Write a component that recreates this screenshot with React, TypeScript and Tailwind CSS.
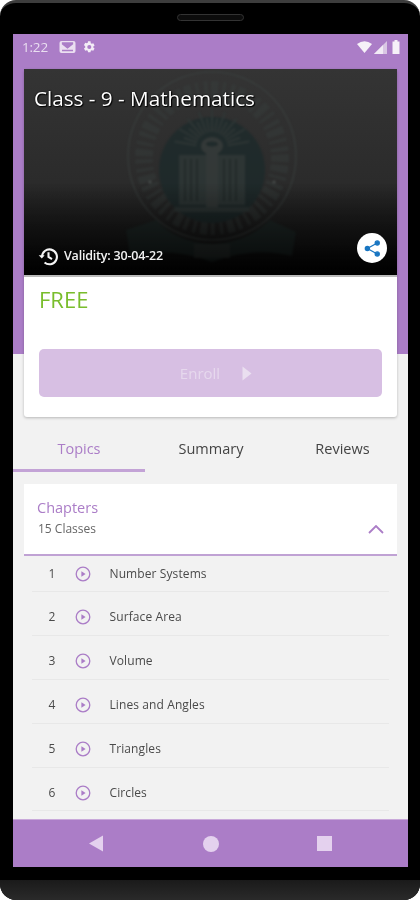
import React from "react";

const chapters = ["Number Systems", "Surface Area", "Volume", "Lines and Angles", "Triangles", "Circles"];

function PlayRing() {
  return (
    <svg width="16" height="16" viewBox="0 0 16 16" className="shrink-0">
      <circle cx="8" cy="8" r="6.8" fill="none" stroke="#ab7dc7" strokeWidth="1.3" />
      <path d="M6.4 5.2 L10.6 8 L6.4 10.8 Z" fill="#ab7dc7" />
    </svg>
  );
}

function Emblem() {
  const rays = Array.from({ length: 17 }, (_, i) => -80 + i * 10);
  return (
    <svg width="176" height="206" viewBox="0 0 176 206" className="shrink-0">
      <circle cx="88" cy="90" r="84" fill="none" stroke="#3e4644" strokeWidth="1.2" />
      <circle cx="88" cy="92" r="68" fill="none" stroke="#3a4341" strokeWidth="18" strokeDasharray="4 3 7 4 3 5" opacity="0.5" />
      <circle cx="88" cy="104" r="53" fill="#19292a" />
      <g stroke="#2e3a39" strokeWidth="2">
        {rays.map((a) => (
          <line
            key={a}
            x1={88 + 16 * Math.sin((a * Math.PI) / 180)}
            y1={82 - 16 * Math.cos((a * Math.PI) / 180)}
            x2={88 + (a % 20 === 0 ? 38 : 30) * Math.sin((a * Math.PI) / 180)}
            y2={82 - (a % 20 === 0 ? 38 : 30) * Math.cos((a * Math.PI) / 180)}
          />
        ))}
      </g>
      <path d="M55 89 H82 V139 H55 Z M94 89 H121 V139 H94 Z" fill="#2e3a39" />
      <path d="M61 93 V135 M67 93 V135 M73 93 V135 M100 93 V135 M106 93 V135 M112 93 V135" stroke="#1f2b2a" strokeWidth="2" />
      <path d="M82 86 H94 V143 H82 Z" fill="#373f3e" />
      <ellipse cx="88" cy="80" rx="11" ry="9" fill="#373f3e" />
      <ellipse cx="88" cy="78" rx="6" ry="2.5" fill="#19292a" />
      <path d="M51 141 H125 V146 H51 Z" fill="#2e3a39" />
      <path d="M2 164 L32 154 Q52 176 88 178 Q124 176 146 154 L172 166 L168 190 Q130 180 88 196 Q46 180 6 190 Z" fill="#1d2a28" />
      <path d="M70 178 H106 V192 H70 Z" fill="#2d3533" />
      <circle cx="26" cy="116" r="1.5" fill="#59615f" />
      <circle cx="150" cy="116" r="1.5" fill="#59615f" />
    </svg>
  );
}

export default function App() {
  return (
    <div className="relative flex h-[900px] w-[420px] flex-col overflow-hidden bg-white font-['Open_Sans',sans-serif] blur-[0.35px]">
      <div className="flex h-full flex-col rounded-[16px] border-t-[3px] border-[#3d3d3d] bg-black">
        <div className="flex h-[31px] shrink-0 justify-center pt-[11px]">
          <div className="h-[7px] w-[67px] rounded-full border border-[#333] bg-[#0c0c0c]" />
        </div>

        <div className="ml-[13px] flex h-[833px] w-[395px] shrink-0 flex-col overflow-hidden bg-[linear-gradient(#ab7dc7_320px,#f2f2f2_320px)]">
          {/* status bar */}
          <div className="flex h-[35px] shrink-0 items-center pb-[9px] pl-[9px] pr-[8px] text-[13.5px] text-[#e9def0]">
            <span className="w-[30px] tracking-[-0.2px]">1:22</span>
            <svg width="17" height="14" viewBox="0 0 17 14" className="ml-[7px]">
              <rect x="0.5" y="1" width="16" height="12" rx="2" fill="#ebdff1" />
              <path d="M3.5 4 L8.5 8 L13.5 4 V3 H3.5 Z M3 10.5 H14" stroke="#ab7dc7" strokeWidth="1.3" fill="#ab7dc7" />
            </svg>
            <svg width="14" height="14" viewBox="0 0 24 24" className="ml-[6px]" fill="#f3edf6">
              <path fillRule="evenodd" d="M19.4 13a7.5 7.5 0 0 0 0-2l2.2-1.7-2.2-3.7-2.6 1a7.6 7.6 0 0 0-1.7-1L14.6 2h-4.3l-.4 2.7a7.6 7.6 0 0 0-1.7 1l-2.6-1-2.2 3.7L5.6 11a7.5 7.5 0 0 0 0 2l-2.2 1.7 2.2 3.7 2.6-1a7.6 7.6 0 0 0 1.7 1l.4 2.6h4.3l.4-2.6a7.6 7.6 0 0 0 1.7-1l2.6 1 2.2-3.7zM12.5 15.5a3.5 3.5 0 1 1 0-7 3.5 3.5 0 0 1 0 7z" />
            </svg>
            <div className="ml-auto flex items-center">
              <svg width="15" height="12" viewBox="0 0 15 12"><path d="M0 3 Q7.5 -2.5 15 3 L7.5 12 Z" fill="#f6f1f8" /></svg>
              <svg width="13" height="13" viewBox="0 0 13 13" className="ml-[2px]">
                <path d="M0 13 L13 0 V13 Z" fill="#d9c6e4" />
                <path d="M0 13 L9 4 V13 Z" fill="#f1eaf5" />
              </svg>
              <svg width="8" height="14" viewBox="0 0 8 14" className="ml-[5px]">
                <path d="M2.5 0 H5.5 V1.5 H7.5 V14 H0.5 V1.5 H2.5 Z" fill="#f6f1f8" />
              </svg>
            </div>
          </div>

          {/* course card */}
          <div className="mx-[11px] shrink-0 rounded-[3px] bg-white shadow-[0_1px_3px_rgba(0,0,0,0.25)]">
            <div className="relative flex h-[206px] flex-col justify-between overflow-hidden bg-[linear-gradient(#343434_0%,#2b2b2b_55%,#141414_85%,#000000_100%)] pb-[12px]">
              <div className="absolute left-[100px] top-[-3px] opacity-65 blur-[0.8px]">
                <Emblem />
              </div>
              <div className="absolute inset-0 bg-[linear-gradient(transparent_55%,rgba(0,0,0,0.7)_100%)]" />
              <h1 className="relative ml-[10px] mt-[15px] text-[20.7px] font-medium leading-[28px] text-white [text-shadow:0_0_2px_#000,1px_1px_1px_#000]">
                Class - 9 - Mathematics
              </h1>
              <div className="relative flex items-end justify-between pl-[14px] pr-[10px]">
                <div className="mb-[-4px] flex items-center text-[12.5px] font-semibold text-[#f2f2f2]">
                  <svg width="21" height="21" viewBox="0 0 24 24" fill="none" stroke="#f5f5f5" strokeWidth="2.4">
                    <path d="M4.6 12.5 A8.5 8.5 0 1 1 7.5 18.8" />
                    <path d="M0.8 10.5 H7.6 L4.4 14.4 Z" fill="#f5f5f5" stroke="none" />
                    <path d="M12 7 V12.6 L16 15" />
                  </svg>
                  <span className="ml-[5px] tracking-[-0.2px]">Validity: 30-04-22</span>
                </div>
                <div className="flex h-[30px] w-[30px] items-center justify-center rounded-full bg-white">
                  <svg width="19" height="19" viewBox="0 0 24 24" fill="#1976c2" stroke="#1976c2" strokeWidth="1.6">
                    <circle cx="18" cy="5" r="2.6" />
                    <circle cx="5.5" cy="12" r="2.6" />
                    <circle cx="18" cy="19" r="2.6" />
                    <path d="M18 5 L5.5 12 L18 19" fill="none" />
                  </svg>
                </div>
              </div>
            </div>
            <div className="border-t-2 border-[#8c8c8c]/60 px-[15px] pb-[20px] pt-[7px]">
              <div className="text-[22px] leading-[30px] text-[#79bd2c]">FREE</div>
              <div className="mt-[35px] flex h-[48px] items-center justify-center rounded-[5px] bg-[#d7bfe3] pl-[11px]">
                <span className="text-[15px] text-[#e6d8ed]">Enroll</span>
                <svg width="10" height="15" viewBox="0 0 10 15" className="ml-[22px]">
                  <path d="M0.5 0.5 L9.5 7.5 L0.5 14.5 Z" fill="#eadff0" />
                </svg>
              </div>
            </div>
          </div>

          {/* tabs */}
          <div className="flex h-[55px] shrink-0 text-[14.5px] font-medium">
            <div className="flex w-[132px] items-center justify-center border-b-[3px] border-[#c3a3d6] pt-[11px] text-[#ab7dc7]">Topics</div>
            <div className="flex w-[132px] items-center justify-center pt-[9px] text-[#444]">Summary</div>
            <div className="flex flex-1 items-center justify-center pt-[9px] text-[#444]">Reviews</div>
          </div>

          {/* chapters */}
          <div className="mx-[11px] mt-[12px] flex h-[72px] shrink-0 items-end justify-between border-b-2 border-[#c0a2d4] bg-white pb-[16px] pl-[13px] pr-[13px]">
            <div className="flex flex-col">
              <span className="text-[14.5px] font-medium leading-[20px] text-[#ab7dc7]">Chapters</span>
              <span className="mt-[2px] pl-[1px] text-[12px] font-medium leading-[18px] text-[#666]">15 Classes</span>
            </div>
            <svg width="16" height="9" viewBox="0 0 16 9" className="mb-[4px]" fill="none" stroke="#ab7dc7" strokeWidth="1.8">
              <path d="M1 8 L8 1 L15 8" />
            </svg>
          </div>

          <div className="mx-[19px] flex shrink-0 flex-col">
            {chapters.map((c, i) => (
              <div key={c} className={`flex shrink-0 items-center border-b border-[#e8e8e8] ${i === 0 ? "h-[36px]" : "h-[43.9px] pt-[8px]"}`}>
                <span className="w-[43px] pr-[3px] text-center text-[12px] font-medium text-[#4a4a4a]">{i + 1}</span>
                <PlayRing />
                <span className="ml-[18.5px] text-[12px] font-medium tracking-[0.1px] text-[#4a4a4a]">{c}</span>
              </div>
            ))}
          </div>

          {/* nav bar */}
          <div className="mt-auto flex h-[48px] shrink-0 items-center border-t border-[#c9a9da] bg-[#ab7dc7]">
            <div className="flex w-[132px] justify-center pl-[34px]">
              <svg width="16" height="17" viewBox="0 0 16 17"><path d="M15 0.5 V16.5 L1 8.5 Z" fill="#e4d1ee" /></svg>
            </div>
            <div className="flex flex-1 justify-center">
              <div className="h-[16px] w-[16px] rounded-full bg-[#e4d1ee]" />
            </div>
            <div className="flex w-[132px] justify-center pr-[36px]">
              <div className="h-[15px] w-[15px] bg-[#e4d1ee]" />
            </div>
          </div>
        </div>

        <div className="mt-[13px] flex-1 rounded-b-[16px] bg-[linear-gradient(#1a1a1a,#2a2a2a)]" />
      </div>
    </div>
  );
}
